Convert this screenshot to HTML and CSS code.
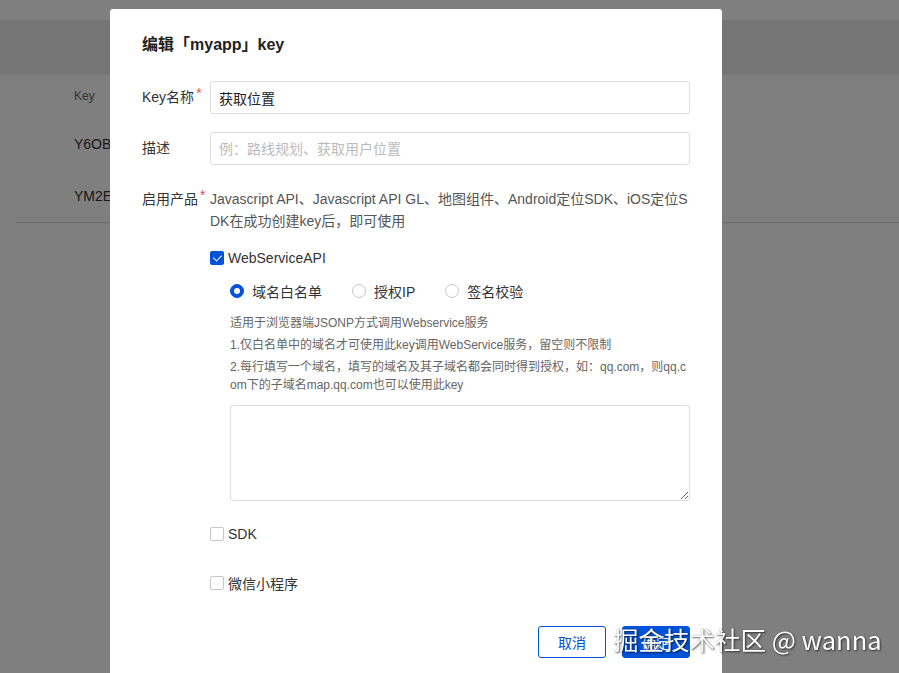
FILE: index.html
```html
<!DOCTYPE html>
<html lang="zh-CN">
<head>
  <meta charset="UTF-8" />
  <meta name="viewport" content="width=device-width, initial-scale=1.0" />
  <title>编辑 key</title>
  <link rel="stylesheet" href="styles.css">
</head>
<body>
  <div class="page">
    <div class="topbar"></div>
    <div class="keylist">
      <div class="keylist-head">Key</div>
      <div class="keylist-row">Y6OB</div>
      <div class="keylist-row last">YM2E</div>
    </div>
  </div>

  <div class="mask"></div>

  <div class="dialog">
    <h2 class="dialog-title">编辑「myapp」key</h2>

    <div class="form-item">
      <label class="form-label">Key名称<span class="required">*</span></label>
      <div class="form-control">
        <input class="input" type="text" value="获取位置" />
      </div>
    </div>

    <div class="form-item">
      <label class="form-label">描述</label>
      <div class="form-control">
        <input class="input" type="text" placeholder="例：路线规划、获取用户位置" />
      </div>
    </div>

    <div class="form-item">
      <label class="form-label">启用产品<span class="required">*</span></label>
      <div class="form-control">
        <p class="product-desc">Javascript API、Javascript API GL、地图组件、Android定位SDK、iOS定位SDK在成功创建key后，即可使用</p>

        <div class="check check-first">
          <span class="check-box checked"></span>
          <span>WebServiceAPI</span>
        </div>

        <div class="sub-options">
          <div class="radios">
            <div class="radio"><span class="radio-dot checked"></span>域名白名单</div>
            <div class="radio"><span class="radio-dot"></span>授权IP</div>
            <div class="radio"><span class="radio-dot"></span>签名校验</div>
          </div>
          <div class="help">
            <p>适用于浏览器端JSONP方式调用Webservice服务</p>
            <p>1.仅白名单中的域名才可使用此key调用WebService服务，留空则不限制</p>
            <p>2.每行填写一个域名，填写的域名及其子域名都会同时得到授权，如：qq.com，则qq.com下的子域名map.qq.com也可以使用此key</p>
          </div>
          <textarea class="textarea"></textarea>
        </div>

        <div class="check check-sdk">
          <span class="check-box"></span>
          <span>SDK</span>
        </div>

        <div class="check check-mini">
          <span class="check-box"></span>
          <span>微信小程序</span>
        </div>
      </div>
    </div>

    <div class="dialog-footer">
      <button class="btn btn-outline">取消</button>
      <button class="btn btn-primary">确定</button>
    </div>
  </div>

  <div class="watermark">掘金技术社区 @ wanna</div>
</body>
</html>
```

FILE: styles.css
```css
body {
  margin: 0;
  width: 899px;
  height: 673px;
  overflow: hidden;
  font-family: "Liberation Sans", "Noto Sans CJK SC", sans-serif;
  font-size: 14px;
  color: #333;
  background: #fff;
}

/* page behind the dialog */
.page {
  padding-top: 20px;
}

.topbar {
  height: 55px;
  background: #ececec;
}

.keylist {
  margin-left: 16px;
  border-bottom: 1px solid #d8d8d8;
}

.keylist-head {
  height: 43px;
  line-height: 43px;
  padding-left: 58px;
  font-size: 12px;
  color: #666;
}

.keylist-row {
  height: 52px;
  line-height: 52px;
  padding-left: 58px;
  font-size: 14px;
  color: #333;
}

.mask {
  position: fixed;
  top: 0;
  left: 0;
  width: 100%;
  height: 100%;
  background: rgba(0, 0, 0, 0.5);
}

/* dialog */
.dialog {
  position: absolute;
  top: 9px;
  left: 110px;
  width: 612px;
  height: 700px;
  box-sizing: border-box;
  padding: 24px 32px;
  background: #fff;
  border-radius: 3px;
}

.dialog-title {
  margin: 0 0 24px;
  font-size: 16px;
  line-height: 24px;
  font-weight: bold;
  color: #222;
}

.form-item {
  display: flex;
  margin-bottom: 18px;
}

.form-label {
  width: 68px;
  flex-shrink: 0;
  line-height: 32px;
  color: #333;
}

.required {
  color: #e34d59;
  vertical-align: top;
  line-height: 24px;
  margin-left: 2px;
}

.form-control {
  flex: 1;
}

.input {
  width: 100%;
  height: 33px;
  box-sizing: border-box;
  padding: 0 8px;
  border: 1px solid #dcdcdc;
  border-radius: 3px;
  font-family: inherit;
  font-size: 14px;
  color: #222;
  outline: none;
}

.input::placeholder {
  color: #bbb;
}

.product-desc {
  margin: 0;
  padding-top: 5px;
  line-height: 22px;
  color: #555;
  word-break: break-all;
}

.check {
  display: flex;
  align-items: center;
  height: 22px;
  color: #333;
}

.check-first {
  margin-top: 15px;
}

.check-sdk {
  margin-top: 22px;
}

.check-mini {
  margin-top: 27px;
}

.check-box {
  width: 14px;
  height: 14px;
  box-sizing: border-box;
  margin-right: 4px;
  border: 1px solid #c8c8c8;
  border-radius: 2px;
  background: #fff;
  position: relative;
}

.check-box.checked {
  border-color: #0052d9;
  background: #0052d9;
}

.check-box.checked::after {
  content: "";
  position: absolute;
  left: 3.5px;
  top: 1px;
  width: 4px;
  height: 7px;
  border: solid #fff;
  border-width: 0 1.5px 1.5px 0;
  transform: rotate(45deg);
}

.sub-options {
  padding-left: 20px;
}

.radios {
  display: flex;
  gap: 30px;
  margin-top: 11px;
  height: 22px;
  align-items: center;
}

.radio {
  display: flex;
  align-items: center;
  color: #333;
}

.radio-dot {
  width: 14px;
  height: 14px;
  box-sizing: border-box;
  margin-right: 8px;
  border: 1px solid #c8c8c8;
  border-radius: 50%;
  position: relative;
}

.radio-dot.checked {
  border-color: #0052d9;
  background: #0052d9;
}

.radio-dot.checked::after {
  content: "";
  position: absolute;
  left: 3px;
  top: 3px;
  width: 6px;
  height: 6px;
  border-radius: 50%;
  background: #fff;
}

.help {
  margin-top: 12px;
  font-size: 12px;
  line-height: 18px;
  color: #666;
  word-break: break-all;
}

.help p {
  margin: 0 0 4px;
}

.textarea {
  display: block;
  width: 100%;
  height: 96px;
  box-sizing: border-box;
  margin-top: 11px;
  border: 1px solid #dcdcdc;
  border-radius: 3px;
  font-family: inherit;
  outline: none;
}

.dialog-footer {
  display: flex;
  justify-content: flex-end;
  gap: 16px;
  margin-top: 32px;
}

.btn {
  width: 68px;
  height: 32px;
  border-radius: 3px;
  font-family: inherit;
  font-size: 14px;
  cursor: pointer;
}

.btn-outline {
  border: 1px solid #0052d9;
  background: #fff;
  color: #0052d9;
}

.btn-primary {
  border: 1px solid #0052d9;
  background: #0052d9;
  color: #fff;
}

.watermark {
  position: absolute;
  left: 613px;
  top: 622px;
  font-family: "Noto Sans CJK SC", sans-serif;
  font-size: 25.5px;
  line-height: 34px;
  color: #fff;
  text-shadow: 1px 1px 2px rgba(0, 0, 0, 0.6), 0 0 1px rgba(0, 0, 0, 0.5);
  white-space: nowrap;
}
```
